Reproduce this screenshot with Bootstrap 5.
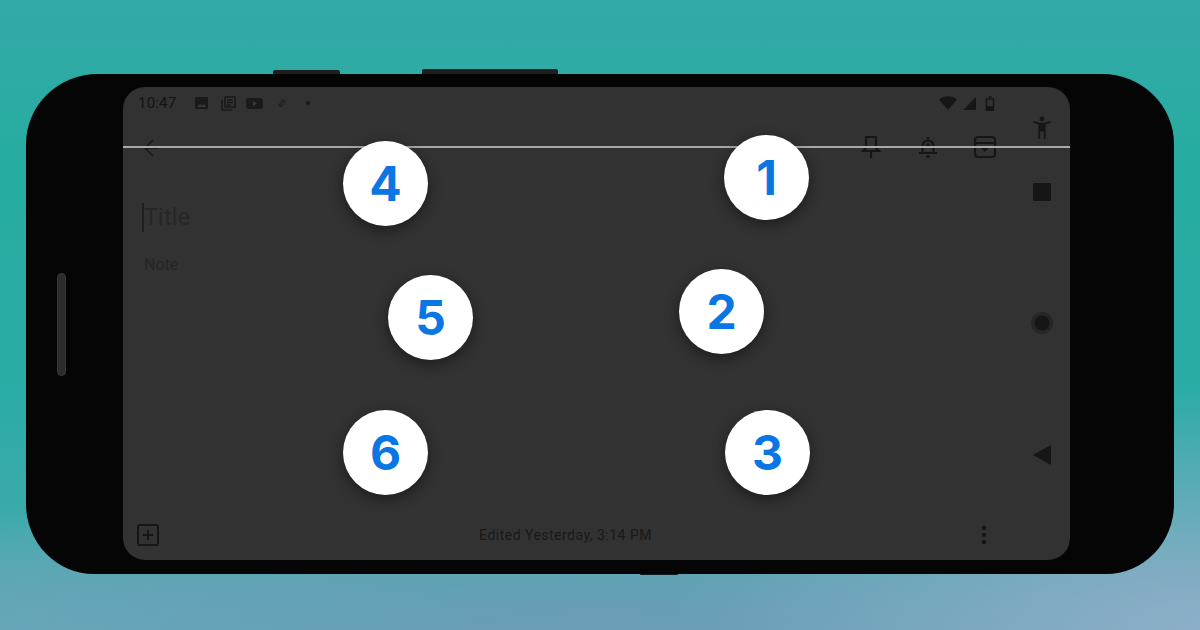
<!DOCTYPE html>
<html lang="en">
<head>
<meta charset="utf-8">
<title>Braille keyboard on phone</title>
<link href="https://cdn.jsdelivr.net/npm/bootstrap@5.3.0/dist/css/bootstrap.min.css" rel="stylesheet">
<style>
html,body{width:1200px;height:630px;overflow:hidden;margin:0}
body{font-family:"Roboto","Liberation Sans",sans-serif}
.backdrop{width:1200px;height:630px;padding:74px 26px 56px;
 background:
  radial-gradient(520px 240px at 1200px 630px,#8eaec8 0%,rgba(142,174,200,0) 100%),
  radial-gradient(760px 170px at 600px 640px,#6b9cb6 0%,rgba(107,156,182,0) 100%),
  radial-gradient(420px 130px at 60px 640px,#66a9b8 0%,rgba(102,169,184,0) 100%),
  linear-gradient(180deg,#33aaa8 0%,#27aca1 25%,#2aaca5 60%,#39aaaa 80%,#5fa8b4 100%);}
.handset{position:relative;height:500px;background:#050505;border-radius:72px 72px 68px 68px/70px;padding:13px 104px 14px 97px}
.side-key{position:absolute;background:#1f1f1f;border-radius:2px 2px 0 0}
.key-a{left:247px;top:-4px;width:67px;height:4px}
.key-b{left:396px;top:-5px;width:136px;height:5px}
.key-c{left:614px;bottom:-1px;width:38px;height:1px;background:#101a22}
.grip{position:absolute;left:31px;top:199px;width:9px;height:103px;border-radius:5px;background:#2c2c2c;border:1px solid #3a3a3a}
.display{position:relative;height:473px;width:947px;background:#323232;border-radius:22px;overflow:hidden;color:#1d1d1d}
.app-col{width:890px;height:473px}
.nav-col{width:57px;height:473px;padding-top:29px}
.status-row{height:32px;padding:0 0 0 15px;font-size:15px;color:#141414}
.status-time{width:47px;letter-spacing:.2px}
.tool-row{height:58px;padding:0 16px 0 19px}
.tool-set{gap:33px;margin-top:-2px}
.title-ph{margin:26px 0 0 19px;font-size:23px;line-height:30px;color:#262626;letter-spacing:.3px}
.title-ph i{display:inline-block;width:2px;height:29px;background:#1e1e1e;vertical-align:-7px}
.note-ph{margin:21px 0 0 21px;font-size:16px;line-height:22px;color:#262626}
.foot-row{height:50px;padding:0 26px 0 13px;font-size:14px;color:#191919;letter-spacing:.48px}
.foot-label{margin-right:10px}
.scan-line{position:absolute;left:0;right:0;top:59px;height:2px;background:#a9a9a9}
.dot-key{position:absolute;width:85px;height:85px;border-radius:50%;background:#fff;color:#0a76e4;font-family:"Inter","Liberation Sans",sans-serif;font-weight:700;font-size:48px;line-height:85px;text-align:center;box-shadow:0 4px 14px rgba(0,0,0,.45)}
.d1{left:601px;top:48px}.d2{left:556px;top:182px}.d3{left:602px;top:323px}
.d4{left:220px;top:54px}.d5{left:265px;top:188px}.d6{left:220px;top:323px}
.tray-end{margin-right:18px}
svg{display:block}
</style>
</head>
<body>
<div class="backdrop">
 <div class="handset">
  <div class="side-key key-a"></div><div class="side-key key-b"></div><div class="side-key key-c"></div><div class="grip"></div>
  <div class="display d-flex">
   <div class="app-col d-flex flex-column">
    <div class="status-row d-flex align-items-center">
     <span class="status-time">10:47</span>
     <svg width="15" height="14" viewBox="0 0 15 14" style="margin-left:9px"><rect x="1" y="1" width="13" height="12" rx="1" fill="#1a1a1a"/><path d="M3 11l3-3 2 2 2-2 2 3z" fill="#3a3a3a"/></svg>
     <svg width="15" height="15" viewBox="0 0 15 15" fill="none" stroke="#1a1a1a" stroke-width="1.6" style="margin-left:12px"><path d="M4 1h10v10H4zM1 4v10h10"/><path d="M6 4h6M6 6.500h6M6 9h4"/></svg>
     <svg width="17" height="13" viewBox="0 0 17 13" style="margin-left:10px"><rect x="0" y="1" width="17" height="11" rx="3" fill="#1a1a1a"/><path d="M7 4l4 2.500-4 2.500z" fill="#3a3a3a"/></svg>
     <svg width="10" height="10" viewBox="0 0 10 10" fill="none" stroke="#222" stroke-width="1.500" style="margin-left:14px"><path d="M2 7l4-5 2 1.500-4 5z"/></svg>
     <svg width="6" height="6" viewBox="0 0 6 6" style="margin-left:18px"><circle cx="3" cy="3" r="2" fill="#1a1a1a"/></svg>
     <div class="ms-auto d-flex align-items-center gap-1 tray-end">
      <svg width="18" height="14" viewBox="0 0 18 14"><path d="M0 3.500C5-1 13-1 18 3.500L9 14z" fill="#161616"/></svg>
      <svg width="16" height="14" viewBox="0 0 16 14"><path d="M15 1v13H2z" fill="#161616"/></svg>
      <svg width="10" height="15" viewBox="0 0 10 15" fill="none" stroke="#161616" stroke-width="1.500" style="margin-left:4px"><path d="M1.500 3h7v11h-7zM3.500 1h3"/><path d="M2 11h6v3H2z" fill="#161616"/></svg>
     </div>
    </div>
    <div class="tool-row d-flex align-items-center">
     <svg width="20" height="20" viewBox="0 0 20 20" fill="none" stroke="#1a1a1a" stroke-width="1.700"><path d="M11 2L3 10l8 8M3 10h14"/></svg>
     <div class="ms-auto d-flex align-items-center tool-set">
      <svg width="24" height="24" viewBox="0 0 24 24" fill="none" stroke="#161616" stroke-width="2.200"><path d="M7 2h10v11l3 3H4l3-3zM12 16v7"/></svg>
      <svg width="24" height="24" viewBox="0 0 24 24" fill="none" stroke="#161616" stroke-width="2.200"><path d="M12 2v2M6.500 17v-6a5.500 5.500 0 0 1 11 0v6M3 18h18M10 21.500h4M12 8v5M9.500 10.500h5"/></svg>
      <svg width="24" height="24" viewBox="0 0 24 24" fill="none" stroke="#161616" stroke-width="2.200"><rect x="2" y="2" width="20" height="20" rx="3"/><path d="M2 8h20"/><path d="M8 13h8l-4 4z" fill="#161616" stroke="none"/></svg>
     </div>
    </div>
    <div class="title-ph"><i></i>Title</div>
    <div class="note-ph">Note</div>
    <div class="foot-row mt-auto d-flex align-items-center justify-content-between">
     <svg width="24" height="24" viewBox="0 0 24 24" fill="none" stroke="#161616" stroke-width="2"><rect x="2" y="2" width="20" height="20" rx="2"/><path d="M12 7v10M7 12h10"/></svg>
     <span class="foot-label">Edited Yesterday, 3:14 PM</span>
     <svg width="6" height="20" viewBox="0 0 6 20" fill="#161616"><circle cx="3" cy="3" r="2.200"/><circle cx="3" cy="10" r="2.200"/><circle cx="3" cy="17" r="2.200"/></svg>
    </div>
   </div>
   <div class="nav-col d-flex flex-column align-items-center">
    <svg width="22" height="24" viewBox="0 0 22 24" fill="#161616"><circle cx="11" cy="3" r="2.400"/><path d="M2 6.500l.5-1.500 6 1.800h5l6-1.800.5 1.500-5.300 2V23h-1.900v-7.500h-3.600V23H7.300V8.500z"/></svg>
    <div style="height:43px"></div>
    <svg width="18" height="18" viewBox="0 0 18 18"><rect width="18" height="18" rx="1" fill="#161616"/></svg>
    <div style="height:111px"></div>
    <svg width="22" height="22" viewBox="0 0 22 22"><circle cx="11" cy="11" r="11" fill="#262626"/><circle cx="11" cy="11" r="7.500" fill="#161616"/></svg>
    <div style="height:111px"></div>
    <svg width="18" height="20" viewBox="0 0 18 20"><path d="M18 0v20L0 10z" fill="#161616"/></svg>
   </div>
   <div class="scan-line"></div>
   <div class="dot-key d1">1</div>
   <div class="dot-key d2">2</div>
   <div class="dot-key d3">3</div>
   <div class="dot-key d4">4</div>
   <div class="dot-key d5">5</div>
   <div class="dot-key d6">6</div>
  </div>
 </div>
</div>
<script src="https://cdn.jsdelivr.net/npm/bootstrap@5.3.0/dist/js/bootstrap.bundle.min.js"></script>
</body>
</html>
